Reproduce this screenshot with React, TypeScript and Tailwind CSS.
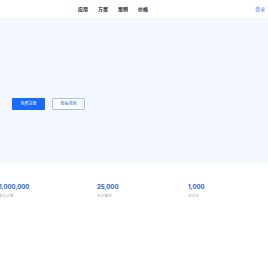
const navItems = ["应用", "方案", "案例", "价格"];

const stats = [
  { value: "1,000,000", label: "参会人数", width: "w-[98px]" },
  { value: "25,000", label: "办会场次", width: "w-[91px]" },
  { value: "1,000", label: "主办方", width: "w-[80px]" },
];

export default function App() {
  return (
    <div className="w-[268px] h-[257px] bg-white overflow-hidden font-['Inter','Noto_Sans_CJK_SC',sans-serif]">
      <header className="h-[19px] flex items-center border-b border-[#eef1f6] bg-white">
        <nav className="flex items-center gap-[10px] ml-[78px]">
          {navItems.map((item) => (
            <span key={item} className="text-[5px] font-bold text-[#1f2329] leading-none">
              {item}
            </span>
          ))}
        </nav>
        <span className="ml-auto mr-[3px] text-[5px] text-[#3b7cff] leading-none">登录</span>
      </header>

      <section className="h-[144px] bg-[#f4f8ff] flex flex-col justify-center">
        <div className="flex items-center gap-[7px] pl-[12px] mt-[26px]">
          <button className="w-[33px] h-[12px] bg-[#1a6bff] text-white text-[4px] leading-none rounded-[1px]">
            免费注册
          </button>
          <button className="w-[33px] h-[12px] bg-white border border-[#a9c3f0] text-[#2f6de0] text-[4px] leading-none rounded-[1px]">
            观看视频
          </button>
        </div>
      </section>

      <div className="flex mt-[20px] ml-[-1px]">
        {stats.map((s) => (
          <div key={s.label} className={`${s.width} flex flex-col`}>
            <span className="text-[6px] font-bold text-[#1d64d8] leading-[7px]">{s.value}</span>
            <span className="text-[3.7px] text-[#9aa0a8] leading-[5px] mt-[3px]">{s.label}</span>
          </div>
        ))}
      </div>
    </div>
  );
}
